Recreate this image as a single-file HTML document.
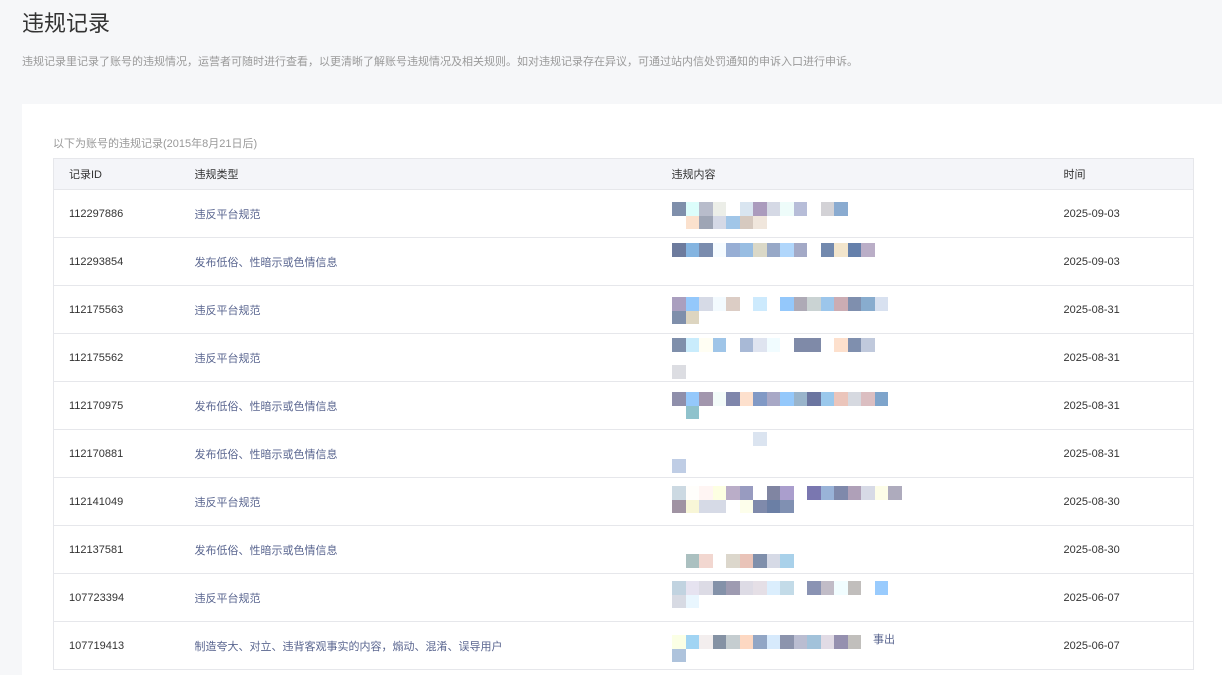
<!DOCTYPE html>
<html><head><meta charset="utf-8"><style>
*{margin:0;padding:0;box-sizing:border-box}
html,body{width:1222px;height:675px;overflow:hidden}
body{background:#f6f7f9;font-family:"Liberation Sans","Noto Sans CJK SC",sans-serif;position:relative}
h1{position:absolute;left:22px;top:6px;font-size:22px;font-weight:normal;color:#333}
.desc{position:absolute;left:22px;top:53px;font-size:11px;color:#9a9a9a}
.panel{position:absolute;left:22px;top:104px;width:1200px;height:600px;background:#fff}
.sub{position:absolute;left:53px;top:135px;font-size:11px;color:#999}
table{position:absolute;left:53px;top:158px;width:1141px;border-collapse:collapse;border:1px solid #e6e7eb;font-size:11px;color:#333}
th{height:31px;background:#f4f5f9;font-weight:normal;text-align:left;border-bottom:1px solid #e6e7eb}
td{height:48px;border-bottom:1px solid #e6e7eb}
th:nth-child(1),td:nth-child(1){padding-left:15px;width:141px}
th:nth-child(2),td:nth-child(2){width:477px}
th:nth-child(3),td:nth-child(3){width:392px}
td:nth-child(2){color:#5a6690}
.m{position:absolute;left:672px;width:240px;display:flex;flex-wrap:wrap}
.m i{display:block;width:13.5px;height:13.5px;flex:none}
.w{width:216px!important}
</style></head><body>
<h1>违规记录</h1>
<div class="desc">违规记录里记录了账号的违规情况，运营者可随时进行查看，以更清晰了解账号违规情况及相关规则。如对违规记录存在异议，可通过站内信处罚通知的申诉入口进行申诉。</div>
<div class="panel"></div>
<div class="sub">以下为账号的违规记录(2015年8月21日后)</div>
<table>
<tr><th>记录ID</th><th>违规类型</th><th>违规内容</th><th>时间</th></tr>
<tr><td>112297886</td><td>违反平台规范</td><td></td><td>2025-09-03</td></tr>
<tr><td>112293854</td><td>发布低俗、性暗示或色情信息</td><td></td><td>2025-09-03</td></tr>
<tr><td>112175563</td><td>违反平台规范</td><td></td><td>2025-08-31</td></tr>
<tr><td>112175562</td><td>违反平台规范</td><td></td><td>2025-08-31</td></tr>
<tr><td>112170975</td><td>发布低俗、性暗示或色情信息</td><td></td><td>2025-08-31</td></tr>
<tr><td>112170881</td><td>发布低俗、性暗示或色情信息</td><td></td><td>2025-08-31</td></tr>
<tr><td>112141049</td><td>违反平台规范</td><td></td><td>2025-08-30</td></tr>
<tr><td>112137581</td><td>发布低俗、性暗示或色情信息</td><td></td><td>2025-08-30</td></tr>
<tr><td>107723394</td><td>违反平台规范</td><td></td><td>2025-06-07</td></tr>
<tr><td>107719413</td><td>制造夸大、对立、违背客观事实的内容，煽动、混淆、误导用户</td><td></td><td>2025-06-07</td></tr>
</table>

<div class="m" style="top:202px"><i style="background:#7f8fab"></i><i style="background:#dcfdfb"></i><i style="background:#b8bccb"></i><i style="background:#eceee8"></i><i></i><i style="background:#d9e5f0"></i><i style="background:#ab9bbd"></i><i style="background:#d5d9e5"></i><i style="background:#eefcfa"></i><i style="background:#b7bdd8"></i><i></i><i style="background:#d3d2d6"></i><i style="background:#8aabd0"></i><i></i><i></i><i></i><i></i>
<i></i><i style="background:#fbe1cd"></i><i style="background:#9ea5b5"></i><i style="background:#d5d9e6"></i><i style="background:#a1c6e8"></i><i style="background:#d6c9bf"></i><i style="background:#f0e6dc"></i></div>

<div class="m" style="top:243px"><i style="background:#6d7b9d"></i><i style="background:#84b4e0"></i><i style="background:#7a8cae"></i><i style="background:#f5fbff"></i><i style="background:#97aed4"></i><i style="background:#98bde2"></i><i style="background:#dad8c7"></i><i style="background:#97a8c7"></i><i style="background:#b0d6fb"></i><i style="background:#a3a9c6"></i><i></i><i style="background:#7289ae"></i><i style="background:#f2e5cc"></i><i style="background:#6580ab"></i><i style="background:#baaec7"></i></div>

<div class="m" style="top:297px"><i style="background:#aa9fbf"></i><i style="background:#94c8fb"></i><i style="background:#d6dae6"></i><i style="background:#f3fafe"></i><i style="background:#dccdc5"></i><i></i><i style="background:#cdeafd"></i><i></i><i style="background:#94c8fb"></i><i style="background:#aeaab6"></i><i style="background:#cad3d3"></i><i style="background:#9cc6eb"></i><i style="background:#cbacb3"></i><i style="background:#7f8fae"></i><i style="background:#88acce"></i><i style="background:#d8e1f0"></i><i></i>
<i style="background:#7f8fab"></i><i style="background:#ddd5c0"></i></div>

<div class="m" style="top:338px"><i style="background:#7f8fab"></i><i style="background:#c9ecfc"></i><i style="background:#fffef3"></i><i style="background:#9fc5e8"></i><i></i><i style="background:#a8b9d6"></i><i style="background:#dfe4f0"></i><i style="background:#f1fcff"></i><i></i><i style="background:#7f8aa8"></i><i style="background:#7f8aa8"></i><i></i><i style="background:#fde0cd"></i><i style="background:#7f8fae"></i><i style="background:#c0c9dc"></i><i></i><i></i></div>
<div class="m" style="top:365px"><i style="background:#dcdde2"></i></div>

<div class="m" style="top:392px"><i style="background:#8f8fab"></i><i style="background:#94c8fb"></i><i style="background:#a296ad"></i><i style="background:#f3fbf9"></i><i style="background:#7f86ab"></i><i style="background:#fde0cd"></i><i style="background:#8199c5"></i><i style="background:#a8a8c6"></i><i style="background:#94c8fb"></i><i style="background:#99b4cb"></i><i style="background:#6b75a0"></i><i style="background:#9ac8ec"></i><i style="background:#ebc5bb"></i><i style="background:#d6d9e0"></i><i style="background:#dbbec1"></i><i style="background:#7ea4cb"></i><i></i>
<i></i><i style="background:#8fc2cc"></i></div>

<div class="m" style="top:432px"><i></i><i></i><i></i><i></i><i></i><i></i><i style="background:#dbe4f0"></i></div>
<div class="m" style="top:459px"><i style="background:#bfcde5"></i></div>

<div class="m" style="top:486px"><i style="background:#ccd9e2"></i><i style="background:#fffefb"></i><i style="background:#fff5f3"></i><i style="background:#fdffe2"></i><i style="background:#baadc8"></i><i style="background:#989bc0"></i><i></i><i style="background:#8085a2"></i><i style="background:#aa9ecd"></i><i></i><i style="background:#7a77b0"></i><i style="background:#99b3d8"></i><i style="background:#7f89ab"></i><i style="background:#afa0b8"></i><i style="background:#d7dae6"></i><i style="background:#fdfde8"></i><i style="background:#aeabbd"></i>
<i style="background:#a093a3"></i><i style="background:#f8f6d7"></i><i style="background:#d6dae6"></i><i style="background:#d6dae6"></i><i></i><i style="background:#fdfeeb"></i><i style="background:#7f8aab"></i><i style="background:#6b7fa5"></i><i style="background:#8090b2"></i></div>

<div class="m" style="top:554px"><i></i><i style="background:#abc0c0"></i><i style="background:#f2d7d0"></i><i></i><i style="background:#dcd7cc"></i><i style="background:#e9c3b8"></i><i style="background:#7f8fab"></i><i style="background:#d6dae6"></i><i style="background:#a9d1ea"></i></div>

<div class="m" style="top:581px"><i style="background:#c1d3e0"></i><i style="background:#e6e3f0"></i><i style="background:#dcdbe5"></i><i style="background:#8492a9"></i><i style="background:#9e9bb1"></i><i style="background:#dddbe5"></i><i style="background:#e5dfe6"></i><i style="background:#dbeefd"></i><i style="background:#c3dbe8"></i><i></i><i style="background:#8a93b3"></i><i style="background:#c1bcc7"></i><i style="background:#f1fdff"></i><i style="background:#c1bebc"></i><i></i><i style="background:#99cbfd"></i><i></i>
<i style="background:#d7dae3"></i><i style="background:#e9f6fe"></i></div>

<div class="m" style="top:635px"><i style="background:#fbffe5"></i><i style="background:#a1d4f3"></i><i style="background:#f3eeee"></i><i style="background:#8592a4"></i><i style="background:#c5cdd0"></i><i style="background:#fdd8c2"></i><i style="background:#92a6c5"></i><i style="background:#d7eafc"></i><i style="background:#8c94ad"></i><i style="background:#babdd1"></i><i style="background:#a2c2da"></i><i style="background:#e1dbe5"></i><i style="background:#9590af"></i><i style="background:#c1bfbc"></i><i></i><i></i><i></i>
<i style="background:#aec3dc"></i></div>
<div style="position:absolute;left:873px;top:631px;font-size:11px;color:#5a6690">事出</div>
</body></html>
